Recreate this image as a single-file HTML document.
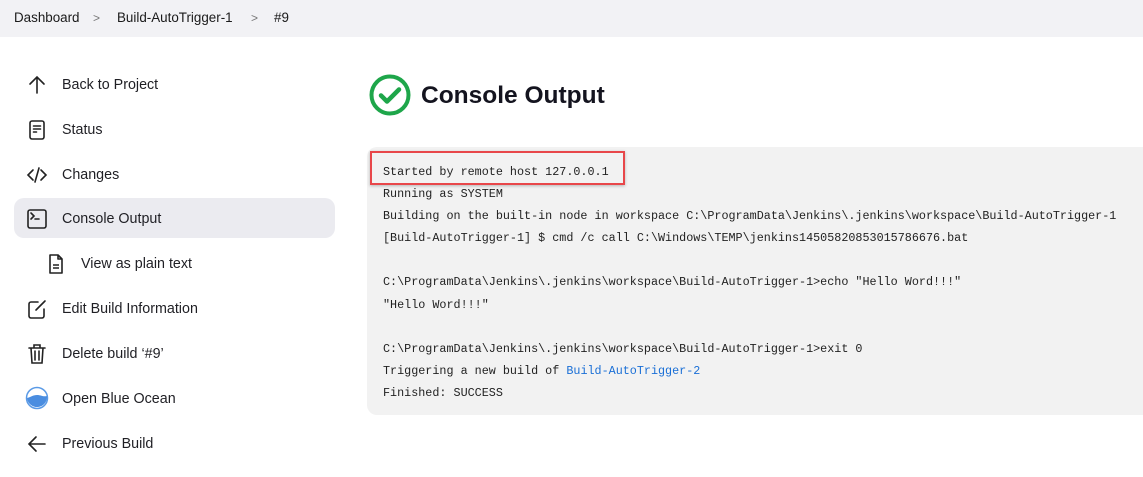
<!DOCTYPE html>
<html><head><meta charset="utf-8"><style>
*{margin:0;padding:0;box-sizing:border-box}
body{width:1143px;height:477px;background:#fff;font-family:"Liberation Sans",sans-serif;color:#1f2328;position:relative;overflow:hidden}
.bc{position:absolute;left:0;top:0;width:1143px;height:37px;background:#f2f2f5;font-size:13.4px;color:#1a1a1a}
.bc span{position:absolute;top:10px}
.bc .sep{color:#777;font-size:12px;top:11px}
.item{position:absolute;left:14px;width:321px;height:40px;border-radius:10px;font-size:14.3px;color:#1f1f24}
.item.sel{background:#ebebf0}
.item .t{position:absolute;left:48px;top:13px}
.item svg{position:absolute;left:12px;top:10px}
.title{position:absolute;left:421px;top:82px;font-size:24.5px;font-weight:bold;color:#14141f}
.con{position:absolute;left:367px;top:147px;width:800px;height:268px;background:#f2f2f2;border-radius:10px}
pre{position:absolute;left:383px;top:161px;font-family:"Liberation Mono",monospace;font-size:11.75px;line-height:22.1px;color:#222}
pre a{color:#1a6fd6;text-decoration:none}
.red{position:absolute;left:370px;top:151px;width:255px;height:34px;border:2px solid #e8474a;box-shadow:0 1px 3px rgba(0,0,0,.25)}
</style></head><body>
<div class="bc"><span style="left:14px">Dashboard</span><span class="sep" style="left:93px">&gt;</span><span style="left:117px">Build-AutoTrigger-1</span><span class="sep" style="left:251px">&gt;</span><span style="left:274px">#9</span></div>

<div class="item" style="top:64px"><svg width="22" height="22" viewBox="0 0 22 22" fill="none" stroke="#222" stroke-width="1.6" stroke-linecap="round"><path d="M11 19V3M4 10l7-7 7 7"/></svg><span class="t">Back to Project</span></div>
<div class="item" style="top:109px"><svg width="22" height="22" viewBox="0 0 22 22" fill="none" stroke="#222" stroke-width="1.6" stroke-linecap="round"><rect x="4" y="2" width="14" height="18" rx="2"/><path d="M7.5 7h7M7.5 10h7M7.5 13h3"/></svg><span class="t">Status</span></div>
<div class="item" style="top:154px"><svg width="22" height="22" viewBox="0 0 22 22" fill="none" stroke="#222" stroke-width="1.6" stroke-linecap="round"><path d="M7 6l-5 5 5 5M15 6l5 5-5 5M13 4l-4 14"/></svg><span class="t">Changes</span></div>
<div class="item sel" style="top:198px"><svg width="22" height="22" viewBox="0 0 22 22" fill="none" stroke="#222" stroke-width="1.6" stroke-linecap="round"><rect x="2" y="2" width="18" height="18" rx="2"/><path d="M5 5l3 3-3 3M9 11h4"/></svg><span class="t">Console Output</span></div>
<div class="item" style="top:243px;left:33px"><svg width="22" height="22" viewBox="0 0 22 22" fill="none" stroke="#222" stroke-width="1.6" stroke-linejoin="round"><path d="M5 2h8l4 4v14H5z M13 2v4h4M8 12h6M8 15h6"/></svg><span class="t">View as plain text</span></div>
<div class="item" style="top:288px"><svg width="22" height="22" viewBox="0 0 22 22" fill="none" stroke="#222" stroke-width="1.6" stroke-linecap="round"><path d="M12 4H5a2 2 0 0 0-2 2v12a2 2 0 0 0 2 2h11a2 2 0 0 0 2-2v-7M10 12l9-9"/></svg><span class="t">Edit Build Information</span></div>
<div class="item" style="top:333px"><svg width="22" height="22" viewBox="0 0 22 22" fill="none" stroke="#222" stroke-width="1.6" stroke-linecap="round"><path d="M3 5h16M8 5V2h6v3M5 5l1 15h10l1-15M9 8v9M13 8v9"/></svg><span class="t">Delete build ‘#9’</span></div>
<div class="item" style="top:378px"><svg width="24" height="24" viewBox="0 0 24 24" style="left:11px;top:8px"><circle cx="12" cy="12" r="10.5" fill="#fff" stroke="#5a9ae6" stroke-width="1.5"/><path d="M2 12c4-1 6-3 10-3s6 2 10 1a10 10 0 0 1-20 2z" fill="#4a8de0"/></svg><span class="t">Open Blue Ocean</span></div>
<div class="item" style="top:423px"><svg width="22" height="22" viewBox="0 0 22 22" fill="none" stroke="#222" stroke-width="1.6" stroke-linecap="round"><path d="M19 11H3M10 4l-7 7 7 7"/></svg><span class="t">Previous Build</span></div>

<svg style="position:absolute;left:368px;top:73px" width="44" height="44" viewBox="0 0 44 44" fill="none"><circle cx="22" cy="22" r="18.5" stroke="#1ea64a" stroke-width="4"/><path d="M13 22.5l6 6 12-12" stroke="#1ea64a" stroke-width="4.5" stroke-linecap="round" stroke-linejoin="round"/></svg>
<div class="title">Console Output</div>

<div class="con"></div>
<pre>Started by remote host 127.0.0.1
Running as SYSTEM
Building on the built-in node in workspace C:\ProgramData\Jenkins\.jenkins\workspace\Build-AutoTrigger-1
[Build-AutoTrigger-1] $ cmd /c call C:\Windows\TEMP\jenkins14505820853015786676.bat

C:\ProgramData\Jenkins\.jenkins\workspace\Build-AutoTrigger-1>echo "Hello Word!!!" 
"Hello Word!!!"

C:\ProgramData\Jenkins\.jenkins\workspace\Build-AutoTrigger-1>exit 0 
Triggering a new build of <a>Build-AutoTrigger-2</a>
Finished: SUCCESS</pre>
<div class="red"></div>
</body></html>
